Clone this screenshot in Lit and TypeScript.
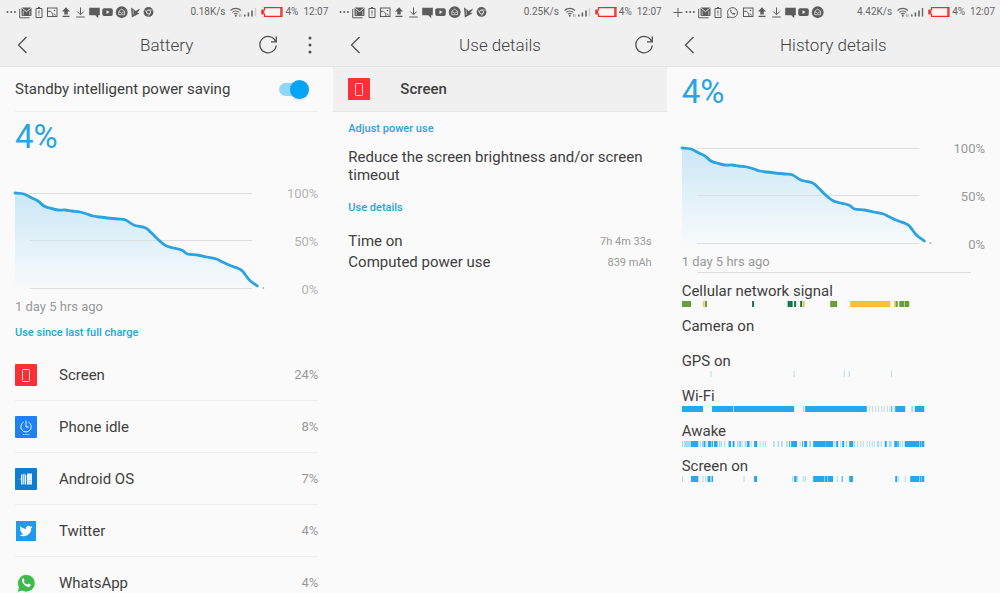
import { LitElement, html, svg, css, nothing } from "lit";
import { customElement, property } from "lit/decorators.js";

/* ---------- data ---------- */

type Point = [number, number];
type Segment = [number, number, string];

const LEVELS: Point[] = [
  [0, 7], [9, 8], [17, 12], [23, 15], [29, 20], [35, 22], [43, 24], [50, 24],
  [57, 25], [65, 26], [72, 28], [78, 30], [85, 31], [93, 32], [103, 33],
  [111, 34], [119, 39], [131, 42], [137, 47], [143, 53], [152, 60], [167, 64],
  [173, 68], [183, 69], [192, 71], [202, 73], [208, 76], [217, 80], [223, 82],
  [228, 85], [235, 94], [243, 100],
];

const smooth = (p: Point[]): string => {
  let d = `M${p[0][0]} ${p[0][1]}`;
  for (let i = 0; i < p.length - 1; i++) {
    const a = p[Math.max(i - 1, 0)];
    const b = p[i];
    const c = p[i + 1];
    const e = p[Math.min(i + 2, p.length - 1)];
    d += `C${b[0] + (c[0] - a[0]) / 6} ${b[1] + (c[1] - a[1]) / 6} ${c[0] - (e[0] - b[0]) / 6} ${c[1] - (e[1] - b[1]) / 6} ${c[0]} ${c[1]}`;
  }
  return d;
};
const CURVE = smooth(LEVELS);

const B = "#26a8ea";
const P = "#a3d9f2";
const G = "#bcdce2";
const LEAF = "#689f38";
const PINE = "#0f7b40";
const GOLD = "#f7bf35";

const ticks = (xs: number[], color: string): Segment[] => xs.map((x) => [x, 1, color]);

const TIMELINES: { name: string; segments: Segment[] }[] = [
  {
    name: "Cellular network signal",
    segments: [
      [0, 9, LEAF], [21, 1.5, GOLD], [23, 2, LEAF], [70, 2, PINE], [105.5, 5, PINE],
      [112, 2, PINE], [118, 2, PINE], [120.5, 2, GOLD], [148, 7, LEAF], [168, 40, GOLD],
      [212, 1.5, GOLD], [213.5, 2, LEAF], [217, 5, LEAF], [222.4, 4.6, LEAF],
    ],
  },
  { name: "Camera on", segments: [] },
  { name: "GPS on", segments: ticks([28.5, 111.5, 161.5, 166.5, 208.8], G) },
  {
    name: "Wi-Fi",
    segments: [
      [0, 21, B], [30, 21, B], [51.6, 60.4, B], [120.6, 1.4, P], [123, 61.6, B],
      ...ticks([187, 190, 193, 196, 199, 201.5, 204.5, 207], G), [209, 1, B],
      [212, 1, P], [213, 10, B], [229, 2, P], [232.5, 9.5, B],
    ],
  },
  {
    name: "Awake",
    segments: [
      [0, 1, P], [2, 7, P], [9, 7.3, B], [18, 1, P], [20.5, 1, B], [22, 1.5, B],
      [24.5, 1, P], [26, 3, B], [29.5, 1.5, B], [32, 3.5, B], [37, 1.5, P], [39, 1, P],
      [42, 1, P], [46.5, 2.5, B], [50.5, 2, B], [55, 1.5, P], [57.5, 1, B], [59.5, 1, P],
      [62.5, 2, P], [65, 2.5, B], [68.5, 1, P], [72, 3.2, B], [77.5, 1, P], [80.5, 1, P],
      [83, 1, P], [91, 1.5, P], [95.5, 1.5, P], [99, 1.5, P], [104, 1.5, P], [107, 1, B],
      [109, 6, B], [117.5, 1, P], [120, 1, B], [122, 3, B], [127, 2, P], [131, 12, B],
      [143, 8, B], [152, 1, P], [154, 2, B], [158, 1, P], [160, 2, B], [163.5, 1.5, P],
      [167, 4, B], [171.5, 1.5, P], [175, 1, G], [178, 1, G], [180.5, 1, G], [184.5, 1, G],
      [187, 1, P], [189.5, 1, P], [192, 1, G], [195, 2, P], [198.5, 1, P], [202.5, 2, B],
      [206.5, 3, P], [212, 3.5, B], [216, 1, B], [218, 1, P], [220, 1, P], [222.5, 14.5, B],
      [237.4, 1.8, B], [239.5, 2.5, B],
    ],
  },
  {
    name: "Screen on",
    segments: [
      [0, 1, G], [9, 7.3, B], [20.5, 1, P], [23, 1, P], [25.5, 3, B], [29.5, 1.5, B],
      [61.5, 1, G], [72, 3, B], [110, 1, P], [112, 2.5, B], [115, 1, P], [120.5, 1, G],
      [122.5, 1, P], [131, 11, B], [142.4, 2.8, B], [145.5, 5.5, B], [154.5, 1, P],
      [159.5, 1, B], [167, 3.8, B], [213, 2, B], [216, 1, P], [222.5, 1, G],
      [228, 9, B], [237.4, 1.8, B], [239.5, 2.5, B],
    ],
  },
];

/* ---------- status icons ---------- */

const INK = "#5c5c5c";

const STATUS_ICONS: Record<string, { w: number; art: unknown }> = {
  plus: { w: 10, art: svg`<path d="M5 2v9M.5 6.500h9" stroke=${INK} fill="none"/>` },
  more: { w: 11, art: svg`<g fill=${INK}><circle cx="1.500" cy="6" r="1"/><circle cx="5.200" cy="6" r="1"/><circle cx="8.900" cy="6" r="1"/></g>` },
  mail: {
    w: 13,
    art: svg`<path d="M.7 3v8.800h9.800" stroke=${INK} fill="none"/>
      <rect x="2.500" y="1.500" width="10" height="8.500" rx="1" fill=${INK}/>
      <path d="M3.300 2.300l4.200 3.400 4.200-3.400" stroke="#f0f0f0" stroke-width=".9" fill="none"/>
      <path d="M4.200 9.200V4.800M10.800 9.200V4.800" stroke="#d0d0d0" stroke-width=".8" fill="none"/>`,
  },
  battery: {
    w: 10,
    art: svg`<path d="M2 2.500h6v9H2zM4 1.500h2" stroke=${INK} fill="none"/><path d="M5 4.500v3M5 8.500v1" stroke=${INK}/>`,
  },
  whatsapp: {
    w: 15,
    art: svg`<path d="M2.300 11.700l.8-2.700a5 5 0 1 1 2 2z" stroke=${INK} fill="none"/>
      <path d="M5.400 3.800c-1 2 2 5.600 4.600 4.800l.3-1-1.500-.8-.8.700c-.9-.4-1.600-1.100-1.900-1.900l.6-.7-.6-1.300z" fill=${INK}/>`,
  },
  image: {
    w: 12,
    art: svg`<rect x="1.500" y="2" width="9.500" height="8.500" stroke=${INK} fill="none"/>
      <path d="M2 5.500c3-1 4.500 1 5 4.500M8 7.500l1.500 2" stroke=${INK} fill="none"/><circle cx="8.500" cy="4.500" r=".8" fill=${INK}/>`,
  },
  upload: { w: 12, art: svg`<path d="M6 1.200l4 4.300H7.700v3H4.300v-3H2zM2.500 9.700h7v1.200h-7z" fill=${INK}/>` },
  download: { w: 13, art: svg`<path d="M6.500 1.500v7M3.300 5.600l3.200 3.200 3.200-3.200M2.200 11h8.600" stroke=${INK} fill="none"/>` },
  chat: { w: 11, art: svg`<path d="M.2 1.800h10.600v7.400H9.200v3L6.300 9.200H.2z" fill=${INK}/>` },
  video: {
    w: 11,
    art: svg`<rect x=".2" y="2.200" width="10.600" height="7.800" rx="2" fill=${INK}/><path d="M4.500 4.300v3.600l3-1.800z" fill="#f0f0f0"/>`,
  },
  inbox: {
    w: 13,
    art: svg`<circle cx="6.700" cy="6.200" r="5.900" fill=${INK}/>
      <path d="M3.800 5.200l2.900-2 2.900 2v3.500H3.800zM3.800 5.500l2.900 1.700 2.900-1.700" stroke="#e4e4e4" stroke-width=".8" fill="none"/>`,
  },
  play: {
    w: 11,
    art: svg`<path d="M1 1.500l3.400 2.200 1.200 1.200L10 2.600 8.900 5 6.900 6.200 9.600 7.200 6 9.200 1.800 11.400z" fill=${INK}/><path d="M3.200 3.500v5.500" stroke="#d8d8d8" stroke-width=".7"/>`,
  },
  chrome: {
    w: 11,
    art: svg`<circle cx="5.500" cy="6" r="4.900" fill=${INK}/><circle cx="5.500" cy="6" r="2" stroke="#e8e8e8" fill="none"/>
      <path d="M5.500 4h4.600M3.800 7L1.500 3.400M7.200 7L5 10.900" stroke="#d8d8d8" stroke-width=".7"/>`,
  },
};

const BASE_TRAY = ["more", "mail", "battery", "image", "upload", "download", "chat", "video", "inbox", "play", "chrome"];
const HISTORY_TRAY = ["plus", "more", "mail", "battery", "whatsapp", "image", "upload", "download", "chat", "video", "inbox"];

/* ---------- app icons ---------- */

const tile = (fill: string) => svg`<rect width="22" height="22" rx="1" fill=${fill}/>`;

const APP_ICONS: Record<string, unknown> = {
  screen: svg`${tile("#fb3036")}<rect x="7.500" y="5.500" width="7" height="12" rx=".8" fill="none" stroke="#ffd0d0"/>`,
  idle: svg`${tile("#1f80f5")}<path d="M8.500 6.200a5.200 5.200 0 1 0 5 0M11 4.500V11h3" fill="none" stroke="#e3f0ff"/>
    <path d="M8 18.500h1.300M10.400 18.500h1.300M12.800 18.500h1.300" stroke="#e3f0ff"/>`,
  android: svg`${tile("#0f7ed0")}<path d="M6 6.500h1.500v10H6zM8.200 5.800h1.300v10.700H8.200zM10 7h1.200v9.500H10zM12 5.500h5v11h-5z" fill="#e8f5ff"/>
    <path d="M4.500 11h2M8 7.500l2.500-1.800M13 12.500h3.500M13 14.500h3.500" stroke="#a9d6f4" stroke-width=".8"/>`,
  twitter: svg`<rect x="1" y="1" width="20" height="20" fill="#1d9bf0"/>
    <path transform="translate(4.500 4.500) scale(.54)" fill="#fff" d="M23.950 4.570a10 10 0 0 1-2.820.770 4.960 4.960 0 0 0 2.160-2.720 9.900 9.900 0 0 1-3.120 1.190 4.920 4.920 0 0 0-8.380 4.480A13.930 13.930 0 0 1 1.640 3.160a4.920 4.920 0 0 0 1.520 6.570 4.900 4.900 0 0 1-2.230-.610v.060a4.920 4.920 0 0 0 3.950 4.830 5 5 0 0 1-2.210.080 4.940 4.940 0 0 0 4.600 3.420A9.870 9.870 0 0 1 0 19.540a13.990 13.990 0 0 0 7.550 2.210c9.050 0 14-7.500 14-13.980 0-.210 0-.420-.020-.630a9.940 9.940 0 0 0 2.460-2.550z"/>`,
  whatsapp: svg`<path d="M1.500 21l1.600-5.400a9.400 9.400 0 1 1 3.700 3.900z" fill="#fff" stroke="#e3e3e3" stroke-width=".6"/>
    <path d="M2.700 19.800l1.300-4.400a8.400 8.400 0 1 1 3.200 3.200z" fill="#3dba4b"/>
    <path d="M8.300 6.200c-2.500 1.300-1 4.400.8 6.300 2 2.100 5.200 3.600 6.500 1.100.3-.8.200-1.100-.3-1.300l-1.700-.8c-.6-.3-.9 1.200-1.600 1-1.600-.6-2.600-1.600-3.200-2.900-.2-.5.900-.9.700-1.500l-.8-1.700c-.1-.2-.2-.3-.4-.2z" fill="#fff"/>`,
};

const appIcon = (name: string) =>
  html`<svg width="22" height="22" viewBox="0 0 22 22" aria-hidden="true">${APP_ICONS[name]}</svg>`;

const APPS = [
  { icon: "screen", name: "Screen", share: "24%" },
  { icon: "idle", name: "Phone idle", share: "8%" },
  { icon: "android", name: "Android OS", share: "7%" },
  { icon: "twitter", name: "Twitter", share: "4%" },
  { icon: "whatsapp", name: "WhatsApp", share: "4%" },
];

/* ---------- status bar ---------- */

@customElement("status-bar")
class StatusBar extends LitElement {
  @property({ attribute: false }) tray: string[] = [];
  @property() speed = "";
  @property({ type: Boolean }) full = false;

  static styles = css`
    :host {
      display: flex;
      justify-content: space-between;
      align-items: center;
      height: 24px;
      padding: 0 5px 0 6px;
      color: #666;
      font-size: 10px;
      line-height: 16px;
      white-space: nowrap;
    }
    .tray { display: flex; gap: 2px; }
    .info { display: flex; align-items: center; gap: 2px; }
    .speed { margin-right: 3px; }
    .cell { margin-right: 2px; }
    .clock { margin-left: 3px; }
    svg { display: block; flex: none; }
  `;

  render() {
    return html`
      <div class="tray">
        ${this.tray.map((name) => {
          const { w, art } = STATUS_ICONS[name];
          return html`<svg width=${w} height="13" viewBox="0 0 ${w} 13" aria-hidden="true">${art}</svg>`;
        })}
      </div>
      <div class="info">
        <span class="speed">${this.speed}</span>
        <svg width="12" height="12" viewBox="0 0 12 12" aria-hidden="true">
          <g fill="none" stroke="#666" stroke-width="1.100">
            <path d="M.5 4.500a7.500 7.500 0 0 1 10.500 0M2.300 6.400a5 5 0 0 1 7 0M4 8.200a2.600 2.600 0 0 1 3.600 0"/>
          </g>
          <circle cx="5.800" cy="9.800" r="1" fill="#666"/><path d="M9.500 8v3M11 8v3" stroke="#999" stroke-width=".7"/>
        </svg>
        <svg class="cell" width="13" height="12" viewBox="0 0 13 12" aria-hidden="true">
          <path d="M0 8.500h1.600v2H0zM3.600 6.500h1.600v4H3.600zM7.200 4.500h1.600v6H7.200z" fill="#666"/>
          <path d="M10.800 2h1.400v8.500h-1.400z" fill=${this.full ? "#666" : "#ccc"}/>
        </svg>
        <svg width="22" height="12" viewBox="0 0 22 12" aria-hidden="true">
          <path d="M3.500 1.700h17.500v8.600H3.500V8H1V4h2.500z" fill="#fdf3f3" stroke="#e0352f" stroke-width="1.200"/>
          <path d="M20 2v8" stroke="#e0352f" stroke-width="1.500"/><path d="M.5 4.500h2.800v3H.5z" fill="#e0352f"/>
        </svg>
        <span>4%</span>
        <span class="clock">12:07</span>
      </div>
    `;
  }
}

/* ---------- title bar ---------- */

@customElement("title-bar")
class TitleBar extends LitElement {
  @property() heading = "";
  @property({ type: Boolean }) refresh = false;
  @property({ type: Boolean }) menu = false;

  static styles = css`
    :host {
      display: grid;
      grid-template-columns: 1fr auto 1fr;
      align-items: center;
      height: 42px;
      padding: 0 11px;
      border-bottom: 1px solid #e4e4e4;
    }
    h1 {
      margin: 0;
      color: #444;
      font-size: 17px;
      font-weight: 300;
      line-height: 24px;
    }
    .actions { display: flex; justify-content: flex-end; gap: 18px; }
    button {
      display: block;
      width: 24px;
      height: 24px;
      padding: 0;
      border: 0;
      background: none;
      color: #505050;
    }
    svg { display: block; }
  `;

  render() {
    return html`
      <div>
        <button aria-label="Back">
          <svg width="24" height="24" viewBox="0 0 24 24"><path d="M15.500 4L7.500 12l8 8" fill="none" stroke="currentColor" stroke-width="1.300"/></svg>
        </button>
      </div>
      <h1>${this.heading}</h1>
      <div class="actions">
        ${this.refresh
          ? html`<button aria-label="Refresh">
              <svg width="24" height="24" viewBox="0 0 24 24"><path d="M19.600 8.400A8.200 8.200 0 1 0 20.200 12.500M20.300 3.500v5.300h-5.300" fill="none" stroke="currentColor" stroke-width="1.300"/></svg>
            </button>`
          : nothing}
        ${this.menu
          ? html`<button aria-label="More options">
              <svg width="24" height="24" viewBox="0 0 24 24" fill="currentColor"><circle cx="12" cy="5" r="1.500"/><circle cx="12" cy="12" r="1.500"/><circle cx="12" cy="19" r="1.500"/></svg>
            </button>`
          : nothing}
      </div>
    `;
  }
}

/* ---------- battery level chart ---------- */

@customElement("battery-chart")
class BatteryChart extends LitElement {
  static styles = css`
    :host { display: block; }
    .level {
      margin: 0;
      padding: 5px 0 29px;
      color: #2aa3e0;
      font-size: 33px;
      line-height: 40px;
    }
    .plot {
      display: grid;
      grid-template-columns: 1fr 54px;
      height: 112px;
    }
    svg { display: block; width: 100%; height: 112px; overflow: visible; }
    .line { vector-effect: non-scaling-stroke; }
    .scale {
      display: flex;
      flex-direction: column;
      justify-content: space-between;
      text-align: right;
      color: var(--scale-color, #b4b4b4);
      font-size: 13px;
      line-height: 16px;
    }
    .since {
      margin: 0;
      color: #999;
      font-size: 13px;
      line-height: 18px;
    }
  `;

  render() {
    return html`
      <p class="level">4%</p>
      <div class="plot">
        <svg viewBox="0 0 250 112" preserveAspectRatio="none" role="img" aria-label="Battery level">
          <defs>
            <linearGradient id="fade" x1="0" y1="0" x2="0" y2="1">
              <stop offset="0" stop-color="#cbe7f6"/>
              <stop offset="1" stop-color="#f8fafb"/>
            </linearGradient>
          </defs>
          <path d="${CURVE}V103H0Z" fill="url(#fade)"/>
          <path class="line" d="M15 7.500h223M15 54.500h223M15 102.500h223" fill="none" stroke="#dcdfe0"/>
          <path class="line" d=${CURVE} fill="none" stroke="#2aa3e0" stroke-width="2.800" stroke-linecap="round"/>
          <circle cx="249" cy="102" r="1" fill="#b5b5b5"/>
        </svg>
        <div class="scale"><span>100%</span><span>50%</span><span>0%</span></div>
      </div>
      <p class="since">1 day 5 hrs ago</p>
    `;
  }
}

/* ---------- page ---------- */

@customElement("app-root")
class AppRoot extends LitElement {
  static styles = css`
    :host {
      display: grid;
      grid-template-columns: repeat(3, minmax(0, 1fr));
      height: 100vh;
      overflow: hidden;
      background: #fafafa;
      color: #404040;
      font-family: Roboto, "Liberation Sans", sans-serif;
      font-size: 15px;
      line-height: 18px;
    }
    .bar { background: #f0f0f0; }
    .body { padding: 0 15px; }
    .setting {
      display: flex;
      align-items: center;
      justify-content: space-between;
      height: 44px;
      padding-right: 9px;
      border-bottom: 1px solid #eee;
    }
    .switch {
      appearance: none;
      display: grid;
      align-items: center;
      width: 30px;
      height: 19px;
      margin: 0;
    }
    .switch::before,
    .switch::after {
      content: "";
      grid-area: 1 / 1;
    }
    .switch::before {
      width: 26px;
      height: 13px;
      border-radius: 7px;
      background: #90d8f8;
    }
    .switch::after {
      justify-self: end;
      width: 19px;
      height: 19px;
      border-radius: 50%;
      background: #06a4f4;
      box-shadow: 0 1px 2px rgba(0, 0, 0, 0.15);
    }
    h2 {
      margin: 0;
      color: #2aa3dc;
      font-size: 11px;
      font-weight: 500;
      line-height: 16px;
    }
    .since-full { padding: 9px 0 8px; }
    ul, dl { margin: 0; padding: 0; list-style: none; }
    .app {
      display: flex;
      align-items: center;
      gap: 22px;
      height: 51px;
      border-bottom: 1px solid #eee;
    }
    .app-name { flex: 1; }
    .share { color: #999; font-size: 13px; }
    .subject {
      display: flex;
      align-items: center;
      gap: 30px;
      height: 44px;
      padding: 0 15px;
      background: #f0f0f0;
      border-bottom: 1px solid #e8e8e8;
      font-weight: 500;
    }
    .adjust { padding: 9px 0 11px; }
    .tip { margin: 0; }
    .detail { padding: 16px 0 15px; }
    .fact {
      display: flex;
      align-items: center;
      justify-content: space-between;
      line-height: 21px;
    }
    dd { margin: 0; color: #999; font-size: 11px; }
    .history { --scale-color: #999; }
    .timelines {
      margin-top: 1px;
      padding-top: 9px;
      background: linear-gradient(#dedede, #dedede) 15px 0 / calc(100% - 29px) 1px no-repeat;
    }
    .timeline { height: 35px; line-height: 20px; }
    .track { display: block; width: 100%; height: 6px; }
    svg { flex: none; }
  `;

  render() {
    return html`
      <section>
        <div class="bar">
          <status-bar .tray=${BASE_TRAY} speed="0.18K/s"></status-bar>
          <title-bar heading="Battery" refresh menu></title-bar>
        </div>
        <div class="body">
          <div class="setting">
            <label for="standby">Standby intelligent power saving</label>
            <input id="standby" class="switch" type="checkbox" role="switch" checked />
          </div>
          <battery-chart></battery-chart>
          <h2 class="since-full">Use since last full charge</h2>
          <ul>
            ${APPS.map(
              (a) => html`<li class="app">
                ${appIcon(a.icon)}<span class="app-name">${a.name}</span><span class="share">${a.share}</span>
              </li>`
            )}
          </ul>
        </div>
      </section>

      <section>
        <div class="bar">
          <status-bar .tray=${BASE_TRAY} speed="0.25K/s"></status-bar>
          <title-bar heading="Use details" refresh></title-bar>
        </div>
        <div class="subject">${appIcon("screen")}<span>Screen</span></div>
        <div class="body">
          <h2 class="adjust">Adjust power use</h2>
          <p class="tip">Reduce the screen brightness and/or screen timeout</p>
          <h2 class="detail">Use details</h2>
          <dl>
            <div class="fact"><dt>Time on</dt><dd>7h 4m 33s</dd></div>
            <div class="fact"><dt>Computed power use</dt><dd>839 mAh</dd></div>
          </dl>
        </div>
      </section>

      <section>
        <div class="bar">
          <status-bar .tray=${HISTORY_TRAY} speed="4.42K/s" full></status-bar>
          <title-bar heading="History details"></title-bar>
        </div>
        <div class="body history">
          <battery-chart></battery-chart>
          <ul class="timelines">
            ${TIMELINES.map(
              (t) => html`<li class="timeline">
                ${t.name}
                <svg class="track" viewBox="0 0 303 6" preserveAspectRatio="none" aria-hidden="true">
                  ${t.segments.map(([x, w, color]) => svg`<rect x=${x} y="0" width=${w} height="6" fill=${color}/>`)}
                </svg>
              </li>`
            )}
          </ul>
        </div>
      </section>
    `;
  }
}
